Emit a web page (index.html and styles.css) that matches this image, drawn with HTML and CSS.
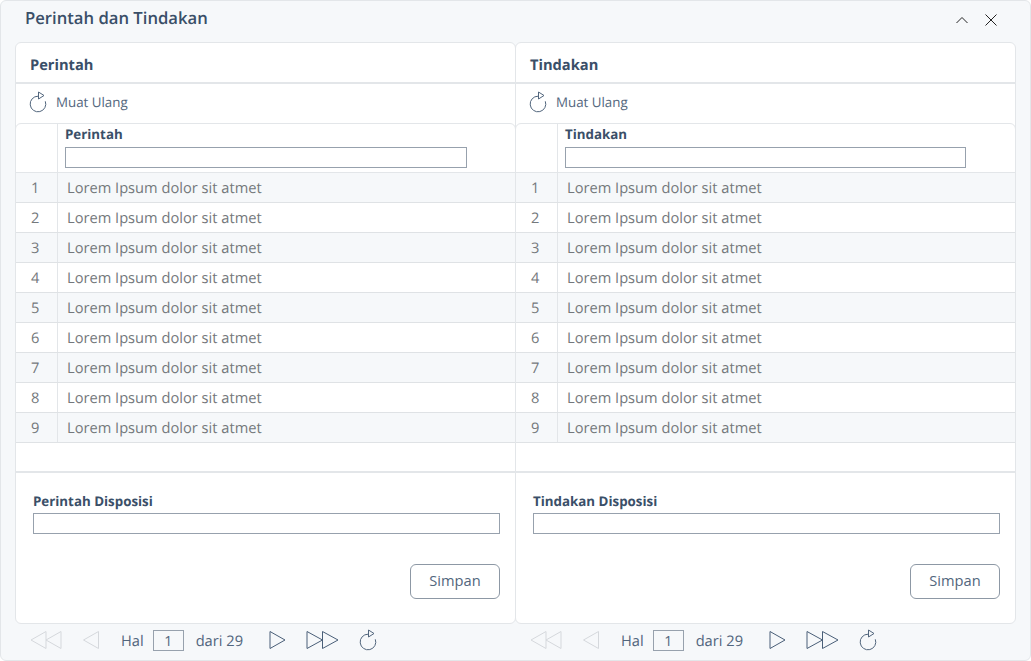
FILE: index.html
```html
<!DOCTYPE html>
<html>
<head lang="en">
    <meta charset="UTF-8">
    <title>Perintah dan Tindakan</title>
    <link rel="stylesheet" href="styles.css">
</head>
<body>
<svg class="defs">
    <symbol id="reload" viewBox="0 0 18 22">
        <path d="M9 5.200A7.800 7.800 0 1 0 16.300 10.300" fill="none" stroke="currentColor"/>
        <path d="M9.500 1L15 4.500L9.500 8Z" fill="none" stroke="currentColor"/>
    </symbol>
</svg>
<div class="window">
    <div class="head">
        <span class="head-title">Perintah dan Tindakan</span>
        <svg class="head-icon" width="12" height="12" viewBox="0 0 12 12"><path d="M0.500 9L6 3.500L11.500 9" fill="none" stroke="#222"/></svg>
        <svg class="head-icon" width="12" height="12" viewBox="0 0 12 12"><path d="M0.500 0.500L11.500 11.500M11.500 0.500L0.500 11.500" fill="none" stroke="#222"/></svg>
    </div>
    <div class="panels">
        <div class="panel">
            <div class="panel-title">Perintah</div>
            <div class="toolbar">
                <svg class="reload"><use href="#reload"/></svg>
                <span>Muat Ulang</span>
            </div>
            <div class="grid">
                <div class="grid-head">
                    <div class="num-cell"></div>
                    <div class="filter-cell">
                        <div class="filter-label">Perintah</div>
                        <input class="filter-input" type="text">
                    </div>
                </div>
                <div class="row odd"><div class="num">1</div><div class="cell">Lorem Ipsum dolor sit atmet</div></div>
                <div class="row"><div class="num">2</div><div class="cell">Lorem Ipsum dolor sit atmet</div></div>
                <div class="row odd"><div class="num">3</div><div class="cell">Lorem Ipsum dolor sit atmet</div></div>
                <div class="row"><div class="num">4</div><div class="cell">Lorem Ipsum dolor sit atmet</div></div>
                <div class="row odd"><div class="num">5</div><div class="cell">Lorem Ipsum dolor sit atmet</div></div>
                <div class="row"><div class="num">6</div><div class="cell">Lorem Ipsum dolor sit atmet</div></div>
                <div class="row odd"><div class="num">7</div><div class="cell">Lorem Ipsum dolor sit atmet</div></div>
                <div class="row"><div class="num">8</div><div class="cell">Lorem Ipsum dolor sit atmet</div></div>
                <div class="row odd"><div class="num">9</div><div class="cell">Lorem Ipsum dolor sit atmet</div></div>
                <div class="row-empty"></div>
            </div>
            <div class="form">
                <label class="form-label">Perintah Disposisi</label>
                <input class="form-input" type="text">
                <div class="form-actions"><button class="btn">Simpan</button></div>
            </div>
        </div>
        <div class="panel">
            <div class="panel-title">Tindakan</div>
            <div class="toolbar">
                <svg class="reload"><use href="#reload"/></svg>
                <span>Muat Ulang</span>
            </div>
            <div class="grid">
                <div class="grid-head">
                    <div class="num-cell"></div>
                    <div class="filter-cell">
                        <div class="filter-label">Tindakan</div>
                        <input class="filter-input" type="text">
                    </div>
                </div>
                <div class="row odd"><div class="num">1</div><div class="cell">Lorem Ipsum dolor sit atmet</div></div>
                <div class="row"><div class="num">2</div><div class="cell">Lorem Ipsum dolor sit atmet</div></div>
                <div class="row odd"><div class="num">3</div><div class="cell">Lorem Ipsum dolor sit atmet</div></div>
                <div class="row"><div class="num">4</div><div class="cell">Lorem Ipsum dolor sit atmet</div></div>
                <div class="row odd"><div class="num">5</div><div class="cell">Lorem Ipsum dolor sit atmet</div></div>
                <div class="row"><div class="num">6</div><div class="cell">Lorem Ipsum dolor sit atmet</div></div>
                <div class="row odd"><div class="num">7</div><div class="cell">Lorem Ipsum dolor sit atmet</div></div>
                <div class="row"><div class="num">8</div><div class="cell">Lorem Ipsum dolor sit atmet</div></div>
                <div class="row odd"><div class="num">9</div><div class="cell">Lorem Ipsum dolor sit atmet</div></div>
                <div class="row-empty"></div>
            </div>
            <div class="form">
                <label class="form-label">Tindakan Disposisi</label>
                <input class="form-input" type="text">
                <div class="form-actions"><button class="btn">Simpan</button></div>
            </div>
        </div>
    </div>
    <div class="pagers">
        <div class="pager">
            <svg class="first" width="32" height="20" viewBox="0 0 32 20"><path d="M1 10L16 1.500V18.500ZM16 10L31 1.500V18.500Z" fill="none" stroke="#d5d8dc"/></svg>
            <svg class="prev" width="16" height="20" viewBox="0 0 16 20"><path d="M0.500 10L15.500 1.500V18.500Z" fill="none" stroke="#d5d8dc"/></svg>
            <span class="hal">Hal</span>
            <input class="page-input" type="text" value="1">
            <span class="dari">dari 29</span>
            <svg class="next" width="17" height="20" viewBox="0 0 17 20"><path d="M16 10L1 1.500V18.500Z" fill="none" stroke="#4a5f78"/></svg>
            <svg class="last" width="33" height="20" viewBox="0 0 33 20"><path d="M16.500 10L1 1.500V18.500ZM32 10L16.500 1.500V18.500Z" fill="none" stroke="#4a5f78"/></svg>
            <svg class="reload"><use href="#reload"/></svg>
        </div>
        <div class="pager">
            <svg class="first" width="32" height="20" viewBox="0 0 32 20"><path d="M1 10L16 1.500V18.500ZM16 10L31 1.500V18.500Z" fill="none" stroke="#d5d8dc"/></svg>
            <svg class="prev" width="16" height="20" viewBox="0 0 16 20"><path d="M0.500 10L15.500 1.500V18.500Z" fill="none" stroke="#d5d8dc"/></svg>
            <span class="hal">Hal</span>
            <input class="page-input" type="text" value="1">
            <span class="dari">dari 29</span>
            <svg class="next" width="17" height="20" viewBox="0 0 17 20"><path d="M16 10L1 1.500V18.500Z" fill="none" stroke="#4a5f78"/></svg>
            <svg class="last" width="33" height="20" viewBox="0 0 33 20"><path d="M16.500 10L1 1.500V18.500ZM32 10L16.500 1.500V18.500Z" fill="none" stroke="#4a5f78"/></svg>
            <svg class="reload"><use href="#reload"/></svg>
        </div>
    </div>
</div>
</body>
</html>
```

FILE: styles.css
```css
*{
    margin: 0;
    padding: 0;
    box-sizing: border-box;
}
html, body{
    height: 100%;
    overflow: hidden;
}
body{
    font-family: "Open Sans", "Liberation Sans", sans-serif;
    text-rendering: geometricPrecision;
    background: #fff;
    color: #3a4f68;
}
.defs{
    display: none;
}
.window{
    width: 1031px;
    height: 661px;
    background: #f6f8fa;
    border: 1px solid #e3e6e9;
    border-radius: 6px;
}
.head{
    height: 41px;
    padding: 0 33px 3px 24px;
    display: flex;
    align-items: center;
}
.head-title{
    flex: 1;
    margin-bottom: 6px;
    font-size: 16.67px;
    font-weight: 600;
    color: #3a4f68;
}
.head-icon{
    margin-left: 17px;
}
.panels{
    display: flex;
    margin-left: 14px;
}
.panel{
    width: 501px;
    height: 582px;
    background: #fff;
    border: 1px solid #e3e6e9;
    border-radius: 6px;
    display: flex;
    flex-direction: column;
}
.panel + .panel{
    margin-left: -1px;
}
.panel + .panel .filter-cell{
    padding-right: 49px;
}
.panel-title{
    height: 41px;
    padding: 0 14px;
    line-height: 45px;
    font-size: 14.67px;
    font-weight: 700;
    color: #3a4f68;
    border-bottom: 2px solid #e3e6e9;
}
.toolbar{
    height: 39px;
    padding: 0 13px 4px;
    display: flex;
    align-items: center;
    font-size: 13.33px;
    color: #52667d;
}
.reload{
    width: 18px;
    height: 22px;
    color: #52667d;
    margin-right: 9px;
}
.grid-head{
    height: 50px;
    margin: 0 -1px;
    display: flex;
    border: 1px solid #e3e6e9;
    border-radius: 6px 6px 0 0;
}
.num-cell{
    width: 42px;
    border-right: 1px solid #e3e6e9;
}
.filter-cell{
    flex: 1;
    padding: 1px 48px 0 7px;
}
.filter-label{
    font-size: 13.33px;
    font-weight: 700;
    line-height: 18px;
    color: #3a4f68;
}
.filter-input, .form-input{
    display: block;
    width: 100%;
    height: 21px;
    border: 1px solid #97a1ad;
    background: #fff;
}
.filter-input{
    margin-top: 4px;
}
.row{
    height: 30px;
    display: flex;
    border-bottom: 1px solid #dfe2e5;
    font-size: 14.67px;
    line-height: 30px;
    color: #74787c;
}
.odd{
    background: #f6f8fa;
}
.num{
    width: 42px;
    padding-left: 15px;
    border-right: 1px solid #e3e6e9;
}
.cell{
    flex: 1;
    padding-left: 9px;
}
.row-empty{
    height: 30px;
    border-bottom: 2px solid #e3e6e9;
}
.form{
    flex: 1;
    padding: 19px 15px 0 17px;
}
.form-label{
    display: block;
    font-size: 13.33px;
    font-weight: 700;
    line-height: 18px;
    color: #3a4f68;
    margin-bottom: 3px;
}
.form-actions{
    display: flex;
    justify-content: flex-end;
    margin-top: 30px;
}
.btn{
    width: 90px;
    height: 35px;
    padding-bottom: 4px;
    background: #fff;
    border: 1px solid #8d98a5;
    border-radius: 6px;
    font-family: inherit;
    font-size: 14.67px;
    color: #52667d;
}
.pagers{
    display: flex;
    margin-left: 14px;
}
.pager{
    width: 500px;
    height: 36px;
    padding: 0 0 3px 15px;
    display: flex;
    align-items: center;
    font-size: 14.67px;
    color: #52667d;
}
.pager svg{
    margin-bottom: 2px;
}
.prev{
    margin-left: 21px;
}
.hal{
    margin-left: 22px;
}
.page-input{
    width: 31px;
    height: 21px;
    margin-left: 9px;
    border: 1px solid #97a1ad;
    background: transparent;
    text-align: center;
    font-family: inherit;
    font-size: 14px;
    color: #52667d;
}
.dari{
    margin-left: 12px;
}
.next{
    margin-left: 26px;
}
.last{
    margin-left: 20px;
}
.pager .reload{
    margin: 0 0 2px 20px;
}
```
